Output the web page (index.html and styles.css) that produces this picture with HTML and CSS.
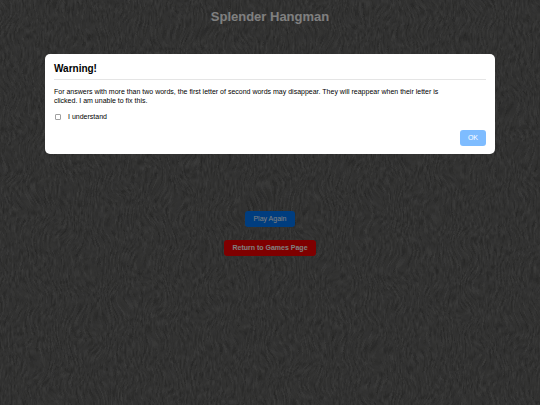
FILE: index.html
```html
<!DOCTYPE html>
<html lang="en">

<head>
    <meta charset="UTF-8">
    <meta name="viewport" content="width=device-width, initial-scale=1.0">
    <title>Splender Hangman</title>
    <link rel="stylesheet" href="styles.css">
</head>

<body>

    <main class="game">
        <h1 class="title">Splender Hangman</h1>
        <div class="board"></div>
        <div class="actions">
            <button class="btn play" type="button">Play Again</button>
            <a class="btn back" href="#">Return to Games Page</a>
        </div>
    </main>

    <div class="overlay">
        <form class="modal" role="dialog" aria-labelledby="warningTitle">
            <h2 class="modal-title" id="warningTitle">Warning!</h2>
            <p class="modal-text">For answers with more than two words, the first letter of second words may disappear. They will reappear when their letter is clicked. I am unable to fix this.</p>
            <div class="confirm">
                <input type="checkbox" id="understand">
                <label for="understand">I understand</label>
            </div>
            <div class="modal-footer">
                <button class="btn ok" id="ok" type="button" disabled>OK</button>
            </div>
        </form>
    </div>

    <script>
        document.querySelector("#understand").addEventListener("change", function () {
            document.querySelector("#ok").disabled = !this.checked;
        });

        document.querySelector("#ok").addEventListener("click", function () {
            document.querySelector(".overlay").remove();
        });
    </script>
</body>

</html>
```

FILE: styles.css
```css
* {
    box-sizing: border-box;
}

body {
    margin: 0;
    min-height: 100vh;
    font-family: "Liberation Sans", Arial, sans-serif;
    font-size: 7px;
    background-color: #5e5e5e;
    /* rough leather grain */
    background-image: url("data:image/svg+xml,%3Csvg xmlns='http://www.w3.org/2000/svg' width='800' height='600'%3E%3Cfilter id='g' x='-10%25' y='-10%25' width='120%25' height='120%25' color-interpolation-filters='sRGB'%3E%3CfeTurbulence type='fractalNoise' baseFrequency='0.5 0.14' numOctaves='2' seed='4' result='n'/%3E%3CfeTurbulence type='fractalNoise' baseFrequency='0.035' numOctaves='1' seed='9' result='w'/%3E%3CfeDisplacementMap in='n' in2='w' scale='24' xChannelSelector='R' yChannelSelector='A'/%3E%3CfeColorMatrix values='0.24 0 0 0 0.27 0.24 0 0 0 0.27 0.24 0 0 0 0.265 0 0 0 0 1'/%3E%3C/filter%3E%3Crect width='800' height='600' filter='url(%23g)'/%3E%3C/svg%3E");
}

.game {
    display: flex;
    flex-direction: column;
    align-items: center;
    padding: 9px 8px;
}

.title {
    margin: 0;
    color: white;
    font-size: 13px;
    line-height: 16px;
}

.board {
    min-height: 186px;
}

.actions {
    display: flex;
    flex-direction: column;
    align-items: center;
    gap: 13px;
}

.btn {
    padding: 0 8px;
    border: none;
    border-radius: 3px;
    color: white;
    font-family: inherit;
    font-size: 7px;
    line-height: 16px;
    text-decoration: none;
    cursor: pointer;
}

.play {
    background-color: #007bff;
}

.back {
    background-color: red;
    font-weight: bold;
}

.overlay {
    position: fixed;
    inset: 0;
    display: flex;
    justify-content: center;
    align-items: flex-start;
    padding: 54px 45px;
    background-color: rgba(0, 0, 0, 0.5);
}

.modal {
    flex: 1;
    padding: 8px 9px;
    border-radius: 5px;
    background-color: white;
    color: black;
}

.modal-title {
    margin: 0 0 7px;
    padding-bottom: 4px;
    border-bottom: 1px solid #e5e5e5;
    font-size: 10px;
    line-height: 13px;
}

.modal-text {
    max-width: 58em;
    margin: 0;
    line-height: 9px;
}

.confirm {
    display: flex;
    align-items: center;
    gap: 7px;
    margin: 7px 0 9px;
    padding-left: 1px;
    line-height: 9px;
}

.confirm input {
    width: 6px;
    height: 6px;
    margin: 0;
    border: 1px solid #a0a0a0;
    border-radius: 1px;
    background-color: white;
    appearance: none;
}

.confirm input:checked {
    border-color: #007bff;
    background-color: #007bff;
}

.modal-footer {
    display: flex;
    justify-content: flex-end;
}

.ok {
    background-color: #007bff;
}

.ok:disabled {
    opacity: 0.5;
    cursor: default;
}
```
